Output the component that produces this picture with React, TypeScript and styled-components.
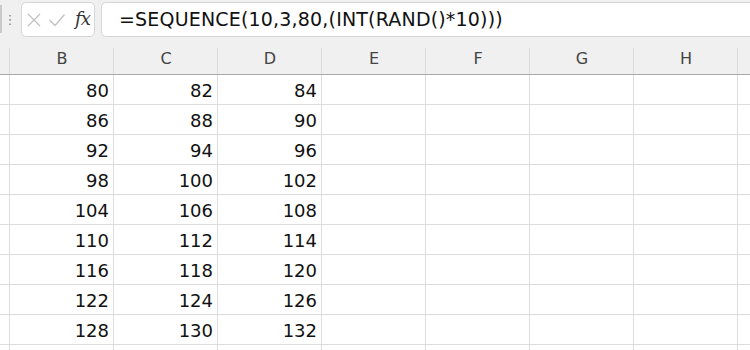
import React from "react";
import styled, { createGlobalStyle } from "styled-components";

const Global = createGlobalStyle`
  html, body { margin: 0; padding: 0; background: #f0f0f0; }
  body { font-family: "DejaVu Sans", "Noto Sans CJK JP", sans-serif; }
`;

const Page = styled.div`
  width: 750px;
  height: 350px;
  overflow: hidden;
  background: #ffffff;
`;

const Toolbar = styled.div`
  height: 40px;
  box-sizing: border-box;
  padding-top: 2px;
  background: #f0f0f0;
  display: flex;
  align-items: flex-start;
`;

const EdgeStub = styled.div`
  width: 2px;
  height: 28px;
  margin-top: 3px;
  background: #c9c9c9;
  flex: none;
`;

const Grip = styled.div`
  width: 19px;
  height: 35px;
  flex: none;
  display: flex;
  align-items: center;
  justify-content: center;
  color: #8a8a8a;
  font-size: 13px;
  line-height: 1;
  padding-right: 3px;
  box-sizing: border-box;
`;

const Box = styled.div<{ $grow?: boolean; $w?: number }>`
  height: 35px;
  box-sizing: border-box;
  background: #ffffff;
  border: 1px solid #d6d6d6;
  border-radius: 5px;
  display: flex;
  align-items: center;
  flex: ${(p) => (p.$grow ? "1 0 auto" : "none")};
  ${(p) => (p.$w ? `width: ${p.$w}px;` : "")}
  ${(p) => (p.$grow ? "margin-right: -20px;" : "")}
`;

const IconRow = styled.div`
  display: flex;
  align-items: center;
  padding-left: 5px;
`;

const Fx = styled.span`
  font-family: "DejaVu Serif", "Liberation Serif", serif;
  font-style: italic;
  font-size: 18px;
  color: #333;
  margin-left: 9px;
  letter-spacing: -1px;
  margin-top: -2px;
`;

const Gap = styled.div`
  width: 6px;
  flex: none;
`;

const Formula = styled.div`
  padding-left: 17px;
  font-size: 19px;
  letter-spacing: 0.18px;
  color: #111;
  white-space: nowrap;
  margin-top: -1px;
`;

const Grid = styled.div`
  display: grid;
  grid-template-columns: 10px repeat(8, 104px);
`;

const HeadCell = styled.div<{ $gutter?: boolean }>`
  height: 35px;
  box-sizing: border-box;
  background: #f0f0f0;
  border-bottom: 1px solid #a9a9a9;
  position: relative;
  display: flex;
  align-items: center;
  justify-content: center;
  font-size: 16px;
  color: #444;
  padding-top: 2px;
  &::after {
    content: "";
    position: absolute;
    right: 0;
    top: 8px;
    bottom: 0;
    width: 1px;
    background: #dadada;
  }
`;

const Cell = styled.div`
  height: 30px;
  box-sizing: border-box;
  border-right: 1px solid #dcdcdc;
  border-bottom: 1px solid #dcdcdc;
  display: flex;
  align-items: center;
  justify-content: flex-end;
  padding-right: 4px;
  padding-top: 1px;
  font-size: 18px;
  color: #111;
`;

const cols = ["B", "C", "D", "E", "F", "G", "H", ""];

export default function App() {
  const rows: (number | "")[][] = [];
  for (let r = 0; r < 10; r++) {
    const row: (number | "")[] = [];
    for (let c = 0; c < 8; c++) {
      row.push(r < 9 && c < 3 ? 80 + r * 6 + c * 2 : "");
    }
    rows.push(row);
  }
  return (
    <Page>
      <Global />
      <Toolbar>
        <EdgeStub />
        <Grip>⋮</Grip>
        <Box $w={74}>
          <IconRow>
            <svg width="14" height="14" viewBox="0 0 14 14">
              <path d="M1 1 L13 13 M13 1 L1 13" stroke="#c2c2c2" strokeWidth="1.3" fill="none" />
            </svg>
            <svg width="18" height="14" viewBox="0 0 18 14" style={{ marginLeft: 7 }}>
              <path d="M1.5 7 L7 12.5 L16.5 1.5" stroke="#c2c2c2" strokeWidth="1.3" fill="none" />
            </svg>
            <Fx>fx</Fx>
          </IconRow>
        </Box>
        <Gap />
        <Box $grow>
          <Formula>=SEQUENCE(10,3,80,(INT(RAND()*10)))</Formula>
        </Box>
      </Toolbar>
      <Grid>
        <HeadCell $gutter />
        {cols.map((c, i) => (
          <HeadCell key={i}>{c}</HeadCell>
        ))}
        {rows.map((row, r) => (
          <React.Fragment key={r}>
            <Cell />
            {row.map((v, c) => (
              <Cell key={c}>{v}</Cell>
            ))}
          </React.Fragment>
        ))}
      </Grid>
    </Page>
  );
}
